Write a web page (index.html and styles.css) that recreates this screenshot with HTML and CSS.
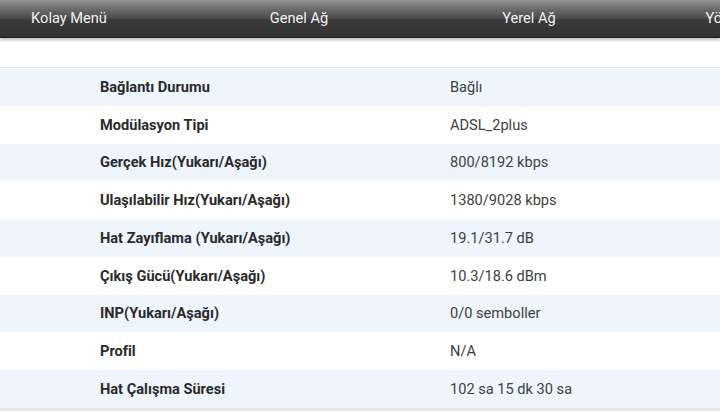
FILE: index.html
```html
<!DOCTYPE html>
<html lang="tr">
<head>
<meta charset="utf-8">
<title>DSL Durumu</title>
<link rel="stylesheet" href="styles.css">
</head>
<body>
<header class="topbar">
  <nav class="nav">
    <a class="nav-item">Kolay Menü</a>
    <a class="nav-item">Genel Ağ</a>
    <a class="nav-item">Yerel Ağ</a>
    <a class="nav-item">Yönetim Araçları</a>
  </nav>
</header>
<main class="content">
  <div class="table">
    <div class="row alt"><span class="label">Bağlantı Durumu</span><span class="value">Bağlı</span></div>
    <div class="row"><span class="label">Modülasyon Tipi</span><span class="value">ADSL_2plus</span></div>
    <div class="row alt"><span class="label">Gerçek Hız(Yukarı/Aşağı)</span><span class="value">800/8192 kbps</span></div>
    <div class="row"><span class="label">Ulaşılabilir Hız(Yukarı/Aşağı)</span><span class="value">1380/9028 kbps</span></div>
    <div class="row alt"><span class="label">Hat Zayıflama (Yukarı/Aşağı)</span><span class="value">19.1/31.7 dB</span></div>
    <div class="row"><span class="label">Çıkış Gücü(Yukarı/Aşağı)</span><span class="value">10.3/18.6 dBm</span></div>
    <div class="row alt"><span class="label">INP(Yukarı/Aşağı)</span><span class="value">0/0 semboller</span></div>
    <div class="row"><span class="label">Profil</span><span class="value">N/A</span></div>
    <div class="row alt"><span class="label">Hat Çalışma Süresi</span><span class="value">102 sa 15 dk 30 sa</span></div>
  </div>
</main>
</body>
</html>
```

FILE: styles.css
```css
html, body {
  margin: 0;
  padding: 0;
  background: #ffffff;
  font-family: Roboto, "Noto Sans", "Liberation Sans", sans-serif;
  overflow: hidden;
}

.topbar {
  height: 37px;
  background: linear-gradient(to bottom, #939393 0%, #666666 28%, #4a4a4a 50%, #3a3a3a 53%, #333333 100%);
  border-bottom: 1px solid #1e1e1e;
  box-shadow: 0 2px 3px rgba(0, 0, 0, 0.25);
  position: relative;
  z-index: 1;
}

.nav {
  display: flex;
  margin-left: -46px;
  height: 100%;
  white-space: nowrap;
}

.nav-item {
  flex: 0 0 230px;
  display: flex;
  align-items: center;
  justify-content: center;
  color: #f2f2f2;
  font-size: 14.6px;
  padding-bottom: 2px;
}

.content {
  padding-top: 29px;
}

.table {
  border-top: 1px solid #e2e4e6;
  border-bottom: 3px solid #e3e4e6;
}

.row {
  display: grid;
  grid-template-columns: 350px 1fr;
  align-items: center;
  height: 37.75px;
  padding-left: 100px;
  font-size: 14.6px;
}

.row.alt {
  background: #eef5fd;
}

.label {
  font-weight: 700;
  color: #2a2a2a;
}

.value {
  color: #404040;
}
```
